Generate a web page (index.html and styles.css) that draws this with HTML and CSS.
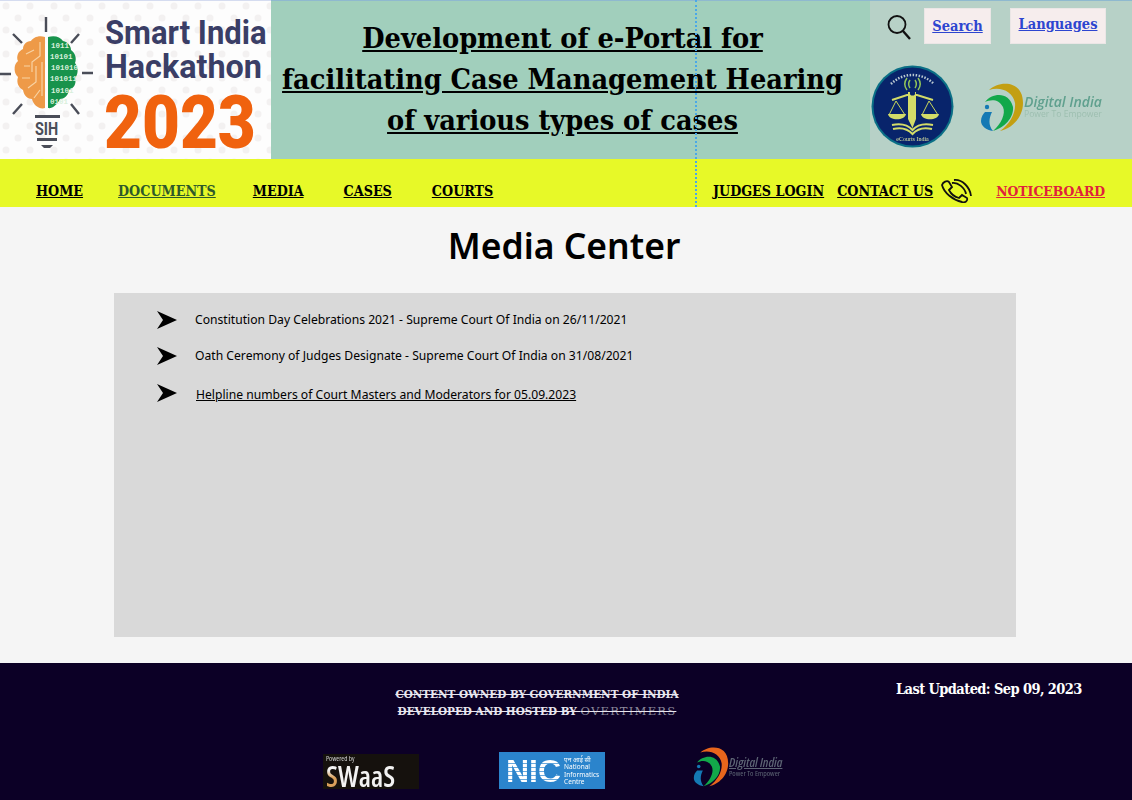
FILE: index.html
```html
<!DOCTYPE html>
<html lang="en">
<head>
  <meta charset="UTF-8">
  <meta name="viewport" content="width=device-width, initial-scale=1.0">
  <title>Media Center</title>
  <link rel="stylesheet" href="styles.css">
</head>
<body>

<svg class="defs" width="0" height="0">
  <symbol id="di-mark" viewBox="0 0 44 50">
    <path fill="currentColor" d="M9 8C18-1 43-3 43 21 43 36 31 47 20 49 30 42 36 31 35 21 33 9 20 4 9 8Z"/>
    <path fill="#12a84a" d="M5 20C12 11 29 9 33 25 34 36 24 46 13 49 21 42 26 32 23 25 19 17 11 17 5 20Z"/>
    <path fill="#1479b4" d="M5 30H12C9 36 8 43 13 49 6 48 1 44 1 39 1 35 3 32 5 30Z"/>
    <circle fill="#1479b4" cx="7" cy="25" r="2.200"/>
  </symbol>
  <symbol id="arrow" viewBox="0 0 20 18">
    <path d="M0 0L20 9 0 18 6 9Z"/>
  </symbol>
</svg>

<div class="guide"></div>

<header class="top">
  <div class="sih">
    <svg width="271" height="159" viewBox="0 0 271 159">
      <defs>
        <pattern id="dots" width="24" height="24" patternUnits="userSpaceOnUse">
          <circle cx="6" cy="6" r="3.500" fill="#f3f1f1"/>
          <circle cx="18" cy="18" r="3.500" fill="#f3f1f1"/>
        </pattern>
      </defs>
      <rect width="271" height="159" fill="#fdfdfd"/>
      <rect width="271" height="159" fill="url(#dots)"/>
      <rect width="271" height="1" fill="#d5dcf0"/>
      <path stroke="#4a4d58" stroke-width="2.400" fill="none" d="M46 17V32M13 34L22 43M79 34L71 43M0 74H11M82 73H93M13 114L22 104M79 114L71 104"/>
      <path fill="#ee9a48" d="M45 37C38 35 33 38 31 41 26 41 23 45 23 49 18 51 16 57 18 61 13 65 14 74 18 77 16 83 19 88 23 90 24 96 28 99 32 99 33 105 40 110 45 108Z"/>
      <path fill="none" stroke="#f8d3a4" stroke-width="1.200" d="M40 42V56L32 62V72M26 54L34 50M24 66H30M36 66V82L28 88M42 62V96M34 98L40 90M22 78L30 78"/>
      <path fill="#18934c" d="M48 37C55 35 60 37 63 41 68 42 71 46 71 50 75 53 77 58 75 63 79 68 78 75 75 78 77 84 73 89 69 90 68 96 64 99 60 99 57 105 52 109 48 108Z"/>
      <g class="bits">
        <text x="51" y="48">1011</text>
        <text x="50" y="59">10101</text>
        <text x="51" y="70">101010</text>
        <text x="50" y="81">101011</text>
        <text x="51" y="93">10101</text>
        <text x="50" y="104">0101</text>
      </g>
      <path fill="#4a4d58" d="M35 115H60V118H35ZM37 138H57V141H37ZM41 145H53L50 148H44Z"/>
      <text class="sih-small" transform="translate(35 135) scale(.8 1)">SIH</text>
      <text class="sih-name" transform="translate(105 44) scale(.94 1)">Smart India</text>
      <text class="sih-name" transform="translate(105 78) scale(.98 1)">Hackathon</text>
      <text class="sih-year" transform="translate(104 148) scale(.885 1)">2023</text>
    </svg>
  </div>
  <div class="title">
    <h1><u>Development of e-Portal for</u><br><u>facilitating Case Management Hearing</u><br><u>of various types of cases</u></h1>
  </div>
  <div class="tools">
    <div class="tools-row">
      <svg class="search-icon" width="24" height="27" viewBox="0 0 24 27" fill="none" stroke="#111">
        <circle cx="10" cy="10.500" r="8.500" stroke-width="1.800"/>
        <path d="M16 17L23 25" stroke-width="2.400"/>
      </svg>
      <a class="tool-btn search-btn" href="#">Search</a>
      <a class="tool-btn lang-btn" href="#">Languages</a>
    </div>
    <div class="logos-row">
      <svg class="ecourts" width="83" height="83" viewBox="0 0 83 83">
        <circle cx="41.500" cy="41.500" r="41" fill="#0b6f86"/>
        <circle cx="41.500" cy="41.500" r="39" fill="#08246b"/>
        <path fill="none" stroke="#b9c8d0" stroke-width="2.500" stroke-dasharray="1.500 1.500" d="M20 19C32 7 51 7 63 19"/>
        <g fill="none" stroke="#8fc25a" stroke-width="1.500">
          <path d="M36 13C33 17 33 21 36 25M39 15C37 18 37 20 39 23M47 13C50 17 50 21 47 25M44 15C46 18 46 20 44 23"/>
        </g>
        <g fill="none" stroke="#d3dc68" stroke-width="2">
          <path d="M21 35L36 30H46L62 35"/>
        </g>
        <g fill="none" stroke="#c9d65a" stroke-width="1">
          <path d="M25 36L18 50M25 36L34 50M58 36L51 50M58 36L67 50"/>
        </g>
        <path fill="#d3dc68" d="M17 49H35C34 56 18 56 17 49ZM50 49H68C67 56 51 56 50 49ZM37 27H45L45 54 41.500 63 37 54Z"/>
        <path fill="none" stroke="#d3dc68" stroke-width="2" d="M21 60C30 58 37 60 41.500 65 46 60 53 58 62 60M22 64C30 62 37 64 41.500 69 46 64 53 62 61 64"/>
        <circle cx="41.500" cy="28" r="2.600" fill="#08246b"/>
        <text class="ecourts-name" x="41.500" y="76" text-anchor="middle">eCourts India</text>
      </svg>
      <div class="di di-top">
        <svg class="di-mark" width="44" height="50"><use href="#di-mark"/></svg>
        <div class="di-text">
          <div class="di-name">Digital India</div>
          <div class="di-sub">Power To Empower</div>
        </div>
      </div>
    </div>
  </div>
</header>

<nav class="menu">
  <div class="menu-left">
    <a href="#">HOME</a>
    <a class="docs" href="#">DOCUMENTS</a>
    <a href="#">MEDIA</a>
    <a class="wide" href="#">CASES</a>
    <a class="wide" href="#">COURTS</a>
  </div>
  <div class="menu-right">
    <a href="#">JUDGES LOGIN</a>
    <a class="contact" href="#">CONTACT US</a>
    <svg class="phone" width="32" height="24" viewBox="0 0 32 24" fill="none" stroke="#111" stroke-width="1.800">
      <path d="M2 6C3 3 7 1 9 3L12 8 9 11C11 15 15 18 19 19L22 16 27 19C28 22 25 24 22 23 13 21 4 14 2 6Z"/>
      <path d="M12 4C18 3 25 9 26 15M14 1C22 0 30 8 31 17"/>
    </svg>
    <a class="notice" href="#">NOTICEBOARD</a>
  </div>
</nav>

<main class="content">
  <h2>Media Center</h2>
  <section class="panel">
    <div class="item">
      <svg class="arrow" width="20" height="18"><use href="#arrow"/></svg>
      <span>Constitution Day Celebrations 2021 - Supreme Court Of India on 26/11/2021</span>
    </div>
    <div class="item">
      <svg class="arrow" width="20" height="18"><use href="#arrow"/></svg>
      <span>Oath Ceremony of Judges Designate - Supreme Court Of India on 31/08/2021</span>
    </div>
    <div class="item item-link">
      <svg class="arrow" width="20" height="18"><use href="#arrow"/></svg>
      <a href="#">Helpline numbers of Court Masters and Moderators for 05.09.2023</a>
    </div>
  </section>
</main>

<footer class="foot">
  <div class="foot-top">
    <p class="owned">CONTENT OWNED BY GOVERNMENT OF INDIA<br>DEVELOPED AND HOSTED BY <span class="overtimers">OVERTIMERS</span></p>
    <p class="updated">Last Updated: Sep 09, 2023</p>
  </div>
  <div class="foot-logos">
    <div class="swaas">
      <span class="swaas-by">Powered by</span>
      <span class="swaas-name"><span class="swaas-s">S</span>WaaS</span>
    </div>
    <div class="nic">
      <span class="nic-big">NIC</span>
      <span class="nic-small">एन आई सी<br>National<br>Informatics<br>Centre</span>
    </div>
    <div class="di di-foot">
      <svg class="di-mark" width="36" height="45"><use href="#di-mark"/></svg>
      <div class="di-text">
        <div class="di-name">Digital India</div>
        <div class="di-sub">Power To Empower</div>
      </div>
    </div>
  </div>
</footer>

</body>
</html>
```

FILE: styles.css
```css
* {
  box-sizing: border-box;
}
body {
  margin: 0;
  background: #f5f5f5;
  color: #000;
  font-family: "Noto Sans", sans-serif;
  position: relative;
  height: 800px;
  overflow: hidden;
}
a {
  color: inherit;
}
.defs {
  position: absolute;
}
.guide {
  position: absolute;
  left: 695px;
  top: 0;
  height: 207px;
  border-left: 2px dotted #4aa8e8;
}
.top {
  display: flex;
  height: 159px;
}
.sih {
  width: 271px;
  filter: blur(0.4px);
}
.sih svg {
  display: block;
  overflow: visible;
}
.sih-name {
  font-family: "Roboto", sans-serif;
  font-weight: 700;
  font-size: 33px;
  fill: #3a3e66;
}
.sih-year {
  font-family: "Roboto", sans-serif;
  font-weight: 900;
  font-size: 74px;
  fill: #f0620e;
}
.sih-small {
  font-family: "Roboto", sans-serif;
  font-weight: 700;
  font-size: 18px;
  fill: #4a4d58;
}
.bits text {
  font-family: "Liberation Mono", monospace;
  font-size: 7.500px;
  font-weight: 700;
  fill: #d9f0dc;
}
.title {
  width: 599px;
  background: #a1cfbc;
  border-top: 1px solid #8fb9cf;
  display: flex;
  justify-content: center;
  padding: 17px 16px 0 0;
}
h1 {
  margin: 0;
  font-family: "DejaVu Serif Condensed", "DejaVu Serif", serif;
  font-stretch: condensed;
  font-size: 28.600px;
  line-height: 41px;
  font-weight: 700;
  text-align: center;
  white-space: nowrap;
}
.tools {
  flex: 1;
  background: #b7d1c7;
  border-top: 1px solid #8fb9cf;
  display: flex;
  flex-direction: column;
}
.tools-row {
  display: flex;
  align-items: flex-start;
  padding: 7px 0 0 17px;
  height: 64px;
}
.search-icon {
  margin: 6px 13px 0 0;
}
.tool-btn {
  height: 36px;
  background: #f6eded;
  color: #2d45d0;
  font-family: "DejaVu Serif Condensed", "DejaVu Serif", serif;
  font-stretch: condensed;
  font-size: 14.500px;
  font-weight: 700;
  display: flex;
  justify-content: center;
  border: 1px solid #ebe6e6;
}
.search-btn {
  width: 67px;
  padding-top: 8px;
  margin-right: 19px;
}
.lang-btn {
  width: 96px;
  padding-top: 6px;
}
.logos-row {
  display: flex;
  align-items: center;
  padding-left: 1px;
}
.ecourts {
  margin-right: 26px;
  filter: blur(0.3px);
}
.ecourts-name {
  font-family: "Liberation Serif", serif;
  font-size: 6px;
  fill: #dfe6a0;
}
.di {
  display: flex;
  align-items: center;
  filter: blur(0.3px);
}
.di-text {
  font-family: "Open Sans", sans-serif;
  white-space: nowrap;
}
.di-name {
  font-style: italic;
  font-weight: 600;
}
.di-top {
  color: #c39f12;
}
.di-top .di-name {
  font-size: 14px;
  line-height: 14px;
  color: #5fa08e;
}
.di-top .di-sub {
  font-size: 8.600px;
  line-height: 10px;
  color: #9dbfb0;
}
.menu {
  height: 48px;
  background: #e7f928;
  display: flex;
  justify-content: space-between;
  align-items: flex-start;
  padding: 22px 27px 0 36px;
  font-family: "DejaVu Serif Condensed", "DejaVu Serif", serif;
  font-stretch: condensed;
  font-size: 14.200px;
  font-weight: 700;
  line-height: 20px;
}
.menu-left {
  display: flex;
  gap: 37px;
}
.menu-left .docs {
  margin-left: -2px;
}
.menu-left .wide {
  margin-left: 3px;
}
.menu-right {
  display: flex;
  align-items: flex-start;
}
.docs {
  color: #2e5a2a;
}
.contact {
  margin-left: 13px;
}
.phone {
  margin: -2px 0 0 7px;
}
.notice {
  color: #e0203c;
  font-size: 13.800px;
  margin-left: 24px;
}
.content {
  height: 456px;
  padding-top: 18px;
}
h2 {
  margin: 0 0 27px;
  font-size: 35.500px;
  line-height: 41px;
  font-weight: 600;
  text-align: center;
  padding-right: 4px;
}
.panel {
  width: 902px;
  height: 344px;
  margin-left: 114px;
  background: #d9d9d9;
  padding: 18px 0 0 43px;
  font-size: 12.150px;
}
.item {
  display: flex;
  align-items: center;
  height: 18px;
  margin-bottom: 18px;
}
.arrow {
  margin-right: 18px;
  flex: none;
}
.item span {
  margin-top: -2px;
}
.item-link {
  margin-top: 19px;
}
.item-link a {
  margin: 2px 0 0 1px;
}
.foot {
  height: 137px;
  background: #0c0026;
  color: #fff;
  font-family: "DejaVu Serif Condensed", "DejaVu Serif", serif;
  font-stretch: condensed;
}
.foot-top {
  display: flex;
  height: 81px;
  padding-top: 23px;
}
.owned {
  width: 896px;
  margin: 0;
  padding-left: 178px;
  font-size: 11.600px;
  font-weight: 700;
  line-height: 17px;
  text-align: center;
  text-decoration: line-through;
  color: #e8e6ee;
}
.overtimers {
  font-family: "DejaVu Serif", serif;
  font-stretch: normal;
  font-weight: 400;
  letter-spacing: 1.200px;
  color: #8d8a9c;
}
.updated {
  margin: -6px 0 0;
  font-size: 14.500px;
  letter-spacing: -0.600px;
  font-weight: 700;
  white-space: nowrap;
}
.foot-logos {
  display: flex;
  align-items: flex-end;
  padding: 0 0 11px 323px;
  height: 56px;
}
.swaas {
  width: 96px;
  height: 35px;
  background: #15110d;
  color: #f2f2f2;
  font-family: "Open Sans", sans-serif;
  margin-right: 80px;
  padding-left: 3px;
  display: flex;
  flex-direction: column;
  filter: blur(0.3px);
}
.swaas-by {
  font-size: 7px;
  line-height: 9px;
  color: #cfcfcf;
}
.swaas-name {
  font-size: 28px;
  line-height: 26px;
  font-weight: 600;
}
.swaas-s {
  background: linear-gradient(#f2f2f2 35%, #d9a05a 55%);
  -webkit-background-clip: text;
  background-clip: text;
  color: transparent;
}
.nic {
  width: 106px;
  height: 37px;
  background: #2b84cc;
  color: #fff;
  font-family: "Liberation Sans", sans-serif;
  margin-right: 88px;
  padding-left: 7px;
  display: flex;
  align-items: center;
  filter: blur(0.3px);
}
.nic-big {
  font-size: 32px;
  font-weight: 700;
  margin-right: 3px;
  line-height: 30px;
  background: repeating-linear-gradient(#fff 0 3px, #6aa9dc 3px 4px);
  -webkit-background-clip: text;
  background-clip: text;
  color: transparent;
}
.nic-small {
  font-size: 6.500px;
  line-height: 7.500px;
  font-family: "Noto Sans", "Liberation Sans", sans-serif;
}
.di-foot {
  color: #e8651c;
}
.di-foot .di-name {
  font-size: 13px;
  line-height: 13px;
  color: #5d6474;
  text-decoration: underline;
}
.di-foot .di-sub {
  font-size: 7.700px;
  line-height: 9px;
  color: #5d6474;
}
```
